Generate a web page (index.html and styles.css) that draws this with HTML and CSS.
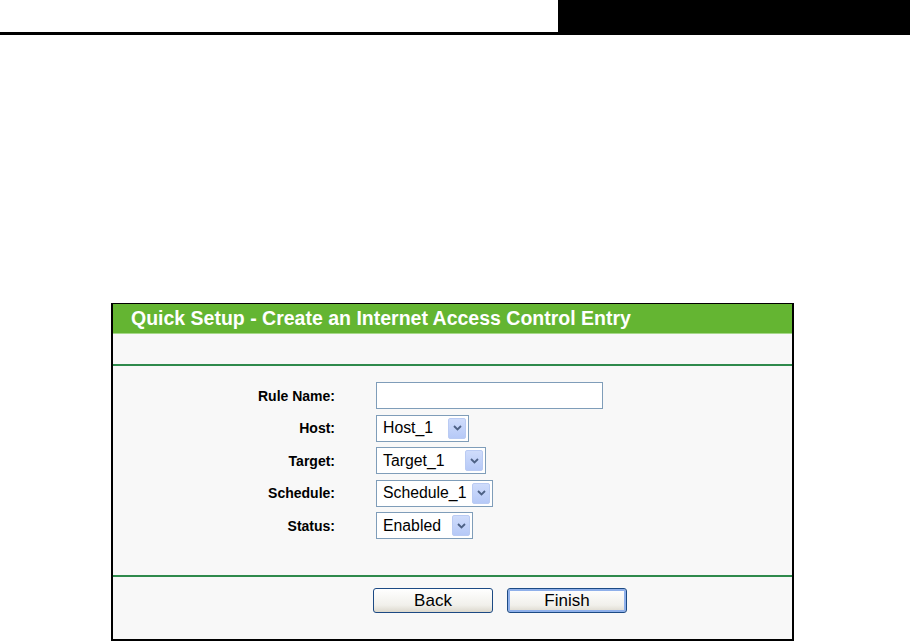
FILE: index.html
```
<!DOCTYPE html>
<html>
<head>
	<meta charset="utf-8">
	<title>Quick Setup - Internet Access Control</title>
	<link rel="stylesheet" href="styles.css">
</head>
<body>
	<div class="topbar">
		<div class="topbar-line"></div>
		<div class="topbar-block"></div>
	</div>

	<div class="panel">
		<div class="panel-title">Quick Setup - Create an Internet Access Control Entry</div>
		<div class="panel-blank"></div>

		<div class="panel-form">
			<label class="lbl" for="ruleName">Rule Name:</label>
			<div><input type="text" id="ruleName" class="champ"></div>

			<div class="lbl">Host:</div>
			<div><div class="choix w-host"><span class="choix-txt">Host_1</span><span class="choix-btn"><svg width="9" height="6" viewBox="0 0 9 6"><path d="M1 1l3.5 3.5L8 1" fill="none" stroke="#4d6185" stroke-width="1.8"/></svg></span></div></div>

			<div class="lbl">Target:</div>
			<div><div class="choix w-target"><span class="choix-txt">Target_1</span><span class="choix-btn"><svg width="9" height="6" viewBox="0 0 9 6"><path d="M1 1l3.5 3.5L8 1" fill="none" stroke="#4d6185" stroke-width="1.8"/></svg></span></div></div>

			<div class="lbl">Schedule:</div>
			<div><div class="choix w-sched"><span class="choix-txt">Schedule_1</span><span class="choix-btn"><svg width="9" height="6" viewBox="0 0 9 6"><path d="M1 1l3.5 3.5L8 1" fill="none" stroke="#4d6185" stroke-width="1.8"/></svg></span></div></div>

			<div class="lbl">Status:</div>
			<div><div class="choix w-status"><span class="choix-txt">Enabled</span><span class="choix-btn"><svg width="9" height="6" viewBox="0 0 9 6"><path d="M1 1l3.5 3.5L8 1" fill="none" stroke="#4d6185" stroke-width="1.8"/></svg></span></div></div>
		</div>

		<div class="panel-buttons">
			<input type="button" value="Back" class="bouton">
			<input type="button" value="Finish" class="bouton bouton-defaut">
		</div>
	</div>
</body>
</html>
```

FILE: styles.css
```
html {
	font-family: "Liberation Sans", Arial, sans-serif;
	box-sizing: border-box;
}
*, *::before, *::after {
	box-sizing: inherit;
}
body {
	margin: 0;
	background: #fff;
}
.topbar {
	display: flex;
	align-items: flex-start;
}
.topbar-line {
	width: 558px;
	height: 35px;
	border-bottom: 3px solid #000;
}
.topbar-block {
	flex: 1;
	height: 35px;
	background: #000;
}

.panel {
	margin: 268px 0 0 111px;
	width: 683px;
	border: 2px solid #000;
	border-top-width: 1px;
	background: #f8f8f8;
}
.panel-title {
	height: 30px;
	padding-left: 18px;
	background: #64b532;
	border-bottom: 1px solid #a6d88a;
	color: #fff;
	font-weight: bold;
	font-size: 19.5px;
	line-height: 29px;
}
.panel-blank {
	height: 32px;
	border-bottom: 2px solid #2e8a4c;
}
.panel-form {
	display: grid;
	grid-template-columns: 222px auto;
	column-gap: 41px;
	row-gap: 5.5px;
	align-items: center;
	padding: 16px 0 36px;
	border-bottom: 2px solid #2e8a4c;
}
.lbl {
	text-align: right;
	font-weight: bold;
	font-size: 14px;
	color: #000;
}
.champ {
	display: block;
	width: 227px;
	height: 27px;
	margin: 0;
	border: 1px solid #7f9db9;
	background: #fff;
}
.choix {
	display: flex;
	align-items: center;
	height: 27px;
	padding: 2px;
	border: 1px solid #7f9db9;
	background: #fff;
	font-size: 15.8px;
	color: #000;
}
.choix-txt {
	flex: 1;
	padding-left: 4px;
}
.choix-btn {
	display: flex;
	align-items: center;
	justify-content: center;
	width: 18px;
	height: 21px;
	border: 1px solid #bacbf3;
	border-radius: 2px;
	background: linear-gradient(#cfdcfb, #b6c9f7);
}
.w-host { width: 93px; }
.w-target { width: 110px; }
.w-sched { width: 117px; }
.w-status { width: 97px; }

.panel-buttons {
	display: flex;
	gap: 14px;
	padding: 11px 0 26px 260px;
}
.bouton {
	width: 120px;
	height: 25px;
	margin: 0;
	padding: 0;
	border: 1px solid #1c4a84;
	border-radius: 3px;
	background: linear-gradient(#ffffff, #f1f0eb 70%, #dcd8cd);
	font-family: "Liberation Sans", Arial, sans-serif;
	font-size: 17px;
	color: #000;
}
.bouton-defaut {
	box-shadow: inset 0 0 0 2px #8fb0ea;
}
```
